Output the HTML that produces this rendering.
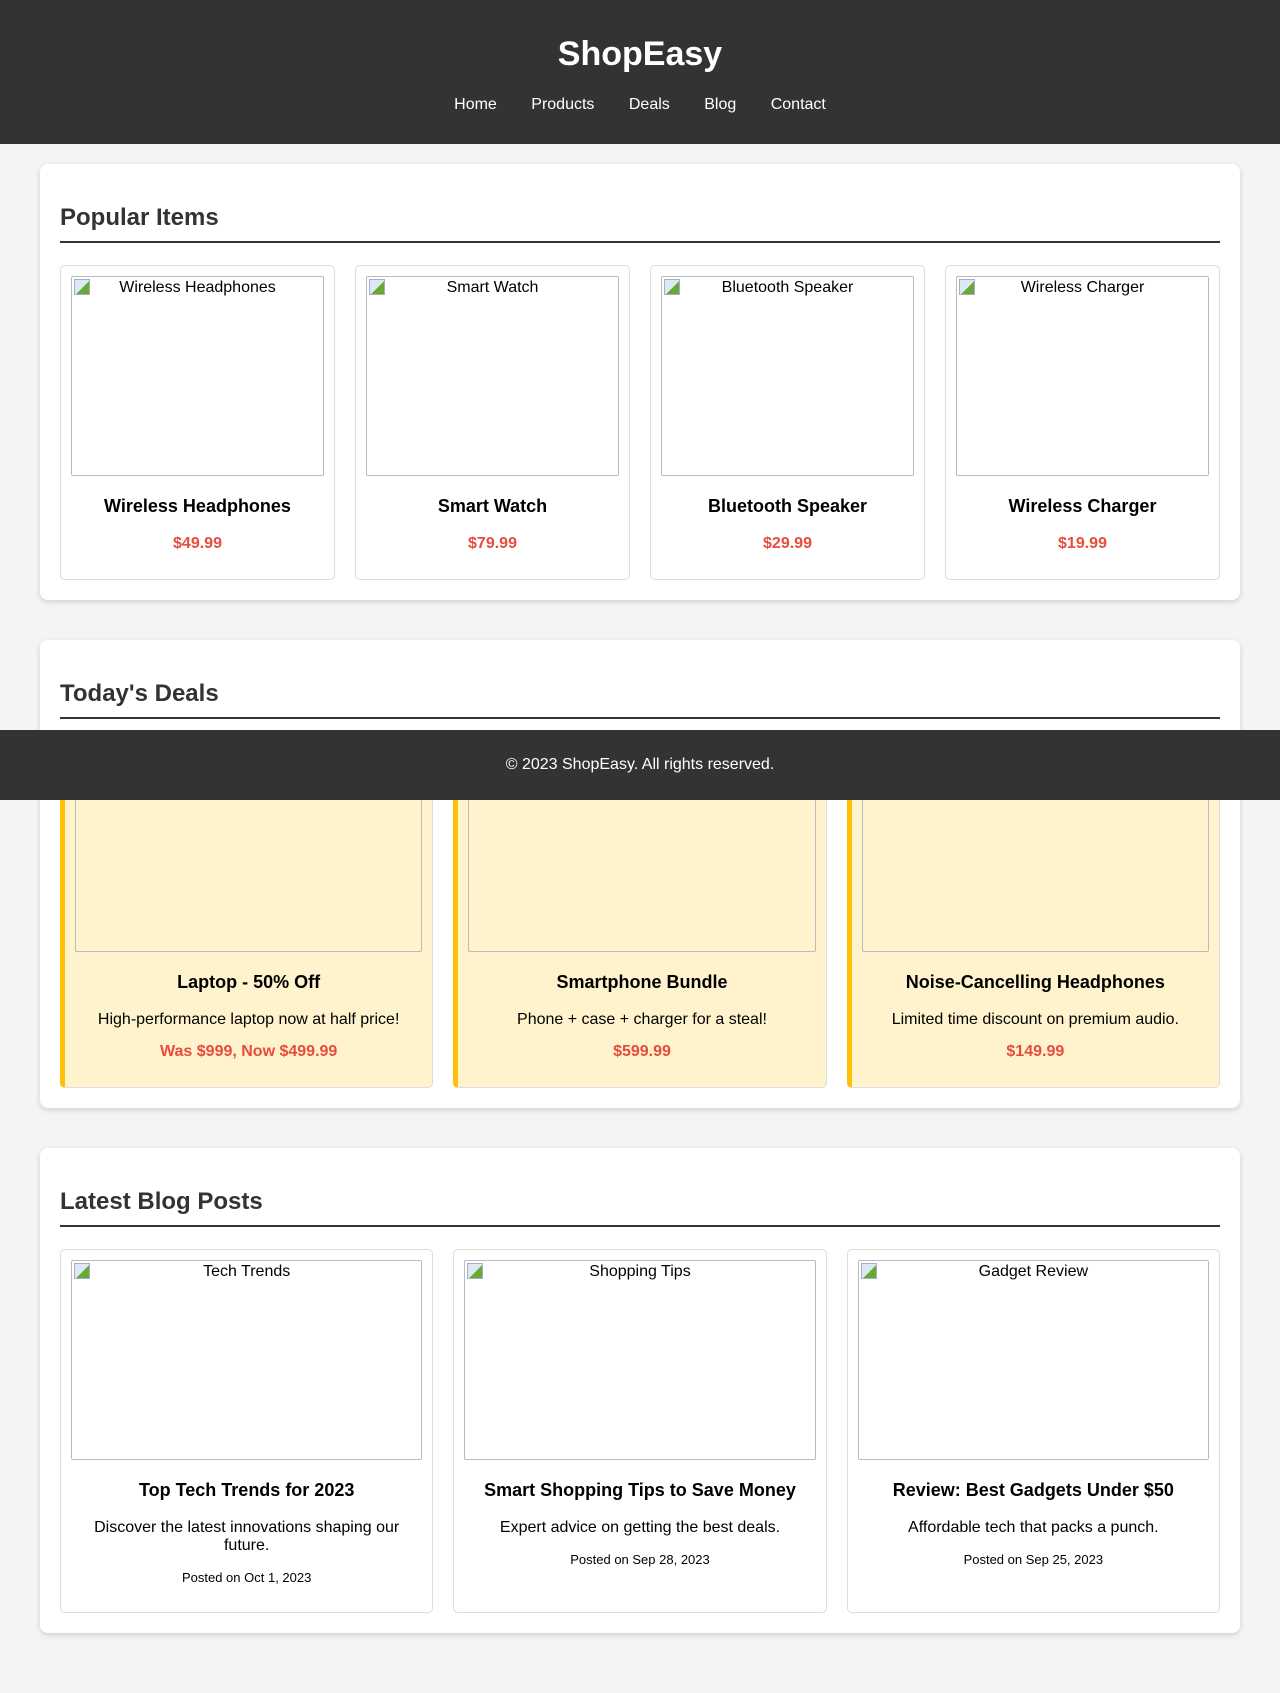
<!DOCTYPE html>
<html><head><meta charset="utf-8"><style>
*{box-sizing:border-box}
body{margin:0;background:#f4f4f4;font-family:"Liberation Sans",Arial,sans-serif;color:#000;height:1693px;position:relative}
header{background:#333;color:#fff;height:144px;text-align:center;padding-top:34px}
header h1{margin:0;font-size:34px;line-height:40px}
nav{margin-top:22px;font-size:16px}
nav a{color:#fff;text-decoration:none;margin:0 15px}
section{background:#fff;width:1200px;margin:0 auto;border-radius:8px;box-shadow:0 2px 6px rgba(0,0,0,.15);padding:20px}
h2{font-size:24px;color:#333;margin:20px 0 22px;padding-bottom:9px;border-bottom:2px solid #333;line-height:28px}
.grid{display:grid;gap:20px}
.g4{grid-template-columns:repeat(4,1fr)}
.g3{grid-template-columns:repeat(3,1fr)}
.card{border:1px solid #ddd;border-radius:5px;padding:10px;text-align:center;background:#fff}
.img{height:200px;border:1px solid #bbb;border-radius:2px;font-size:16px;line-height:22px;text-align:center;position:relative}
.img:before{content:"";position:absolute;left:2px;top:2px;width:14px;height:14px;border:1px solid #aac;background:linear-gradient(135deg,#dde8f5 55%,#6a3 55%)}
h3{font-size:18px;margin:19px 0 18px;line-height:22px}
.price{color:#e74c3c;font-weight:bold;font-size:16px;margin:0 0 16px}
.deal{background:#fff3cd;border-left:5px solid #ffc107}
.deal .img:before{display:none}
.card p{margin:0 0 14px;font-size:16px;line-height:18px}
.date{font-size:13px!important}
footer{position:absolute;top:730px;left:0;width:1280px;height:70px;background:#333;color:#fff;text-align:center;line-height:70px;font-size:16px}
</style></head><body>
<header><h1>ShopEasy</h1><nav><a>Home</a> <a>Products</a> <a>Deals</a> <a>Blog</a> <a>Contact</a></nav></header>
<div style="height:20px"></div>
<section>
<h2>Popular Items</h2>
<div class="grid g4">
<div class="card"><div class="img">Wireless Headphones</div><h3>Wireless Headphones</h3><div class="price">$49.99</div></div>
<div class="card"><div class="img">Smart Watch</div><h3>Smart Watch</h3><div class="price">$79.99</div></div>
<div class="card"><div class="img">Bluetooth Speaker</div><h3>Bluetooth Speaker</h3><div class="price">$29.99</div></div>
<div class="card"><div class="img">Wireless Charger</div><h3>Wireless Charger</h3><div class="price">$19.99</div></div>
</div></section>
<div style="height:40px"></div>
<section>
<h2>Today's Deals</h2>
<div class="grid g3">
<div class="card deal"><div class="img">Laptop</div><h3>Laptop - 50% Off</h3><p>High-performance laptop now at half price!</p><div class="price">Was $999, Now $499.99</div></div>
<div class="card deal"><div class="img">Smartphone</div><h3>Smartphone Bundle</h3><p>Phone + case + charger for a steal!</p><div class="price">$599.99</div></div>
<div class="card deal"><div class="img">Headphones</div><h3>Noise-Cancelling Headphones</h3><p>Limited time discount on premium audio.</p><div class="price">$149.99</div></div>
</div></section>
<div style="height:40px"></div>
<section>
<h2>Latest Blog Posts</h2>
<div class="grid g3" style="align-items:start">
<div class="card" style="height:364px"><div class="img">Tech Trends</div><h3>Top Tech Trends for 2023</h3><p>Discover the latest innovations shaping our future.</p><p class="date">Posted on Oct 1, 2023</p></div>
<div class="card" style="height:364px"><div class="img">Shopping Tips</div><h3>Smart Shopping Tips to Save Money</h3><p>Expert advice on getting the best deals.</p><p class="date">Posted on Sep 28, 2023</p></div>
<div class="card" style="height:364px"><div class="img">Gadget Review</div><h3>Review: Best Gadgets Under $50</h3><p>Affordable tech that packs a punch.</p><p class="date">Posted on Sep 25, 2023</p></div>
</div></section>
<footer>© 2023 ShopEasy. All rights reserved.</footer>
</body></html>
